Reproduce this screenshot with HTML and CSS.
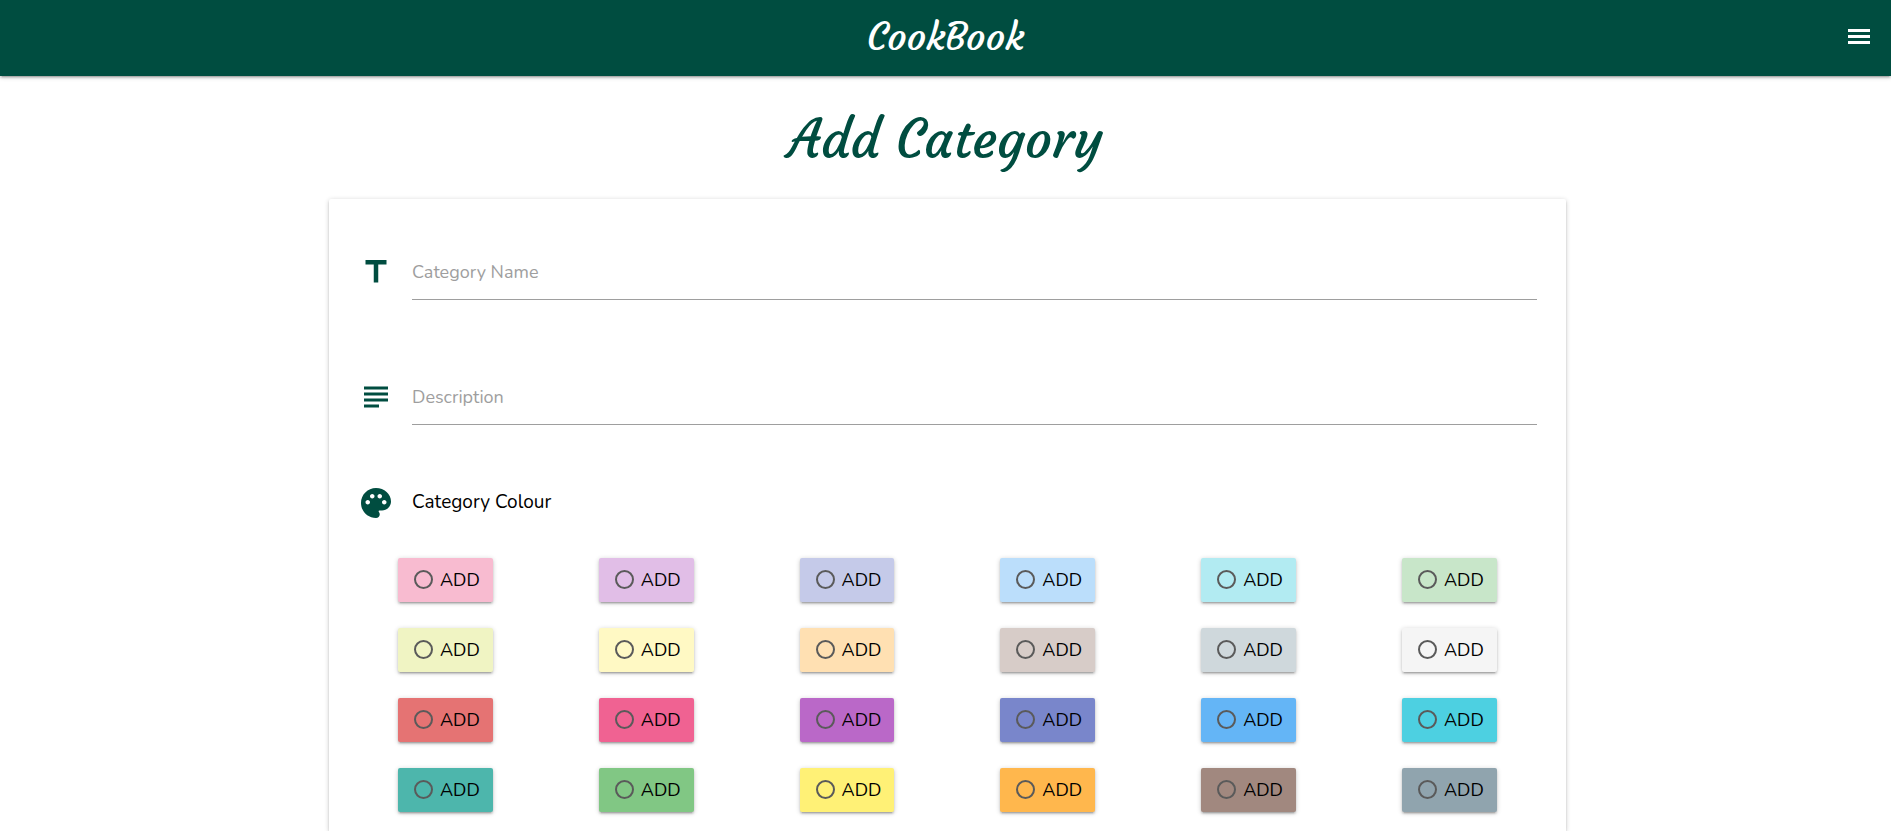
FILE: index.html
```html
<!DOCTYPE html>
<html lang="en">
<head>
<meta charset="utf-8">
<meta name="viewport" content="width=device-width, initial-scale=1">
<title>CookBook - Add Category</title>
<link rel="stylesheet" href="styles.css">
</head>
<body>
<header class="navbar">
  <a class="brand" href="#">CookBook</a>
  <button class="menu-button" type="button" aria-label="Menu">
    <svg viewBox="0 0 30 30" aria-hidden="true"><path d="M4 7h22v3H4zM4 13h22v3H4zM4 19h22v3H4z"/></svg>
  </button>
</header>
<main class="page">
  <h1 class="title">Add Category</h1>
  <form class="card">
    <div class="field">
      <svg class="icon" viewBox="0 0 24 24" aria-hidden="true"><path d="M5 4v3h5.5v12h3V7H19V4z"/></svg>
      <input class="text-input" type="text" placeholder="Category Name" aria-label="Category Name">
    </div>
    <div class="field">
      <svg class="icon" viewBox="0 0 24 24" aria-hidden="true"><path d="M14 17H4v2h10v-2zm6-8H4v2h16V9zM4 15h16v-2H4v2zM4 5v2h16V5H4z"/></svg>
      <input class="text-input" type="text" placeholder="Description" aria-label="Description">
    </div>
    <div class="colour-heading">
      <svg class="icon" viewBox="0 0 24 24" aria-hidden="true"><path d="M12 2C6.49 2 2 6.49 2 12s4.49 10 10 10c1.38 0 2.5-1.12 2.5-2.5 0-.61-.23-1.2-.64-1.67-.08-.1-.13-.21-.13-.33 0-.28.22-.5.5-.5H16c3.31 0 6-2.69 6-6 0-4.96-4.49-9-10-9zm5.5 11c-.83 0-1.5-.67-1.5-1.5s.67-1.5 1.5-1.5 1.5.67 1.5 1.5-.67 1.5-1.5 1.5zm-3-4c-.83 0-1.5-.67-1.5-1.5S13.67 6 14.5 6s1.5.67 1.5 1.5S15.33 9 14.5 9zM5 11.5c0-.83.67-1.5 1.5-1.5s1.5.67 1.5 1.5S7.33 13 6.5 13 5 12.33 5 11.5zm6-4c0 .83-.67 1.5-1.5 1.5S8 8.33 8 7.5 8.67 6 9.5 6s1.5.67 1.5 1.5z"/></svg>
      <span class="colour-label" id="colour-label">Category Colour</span>
    </div>
    <div class="swatches" role="radiogroup" aria-labelledby="colour-label">
      <label class="swatch pink-light"><input type="radio" name="colour"><span>ADD</span></label>
      <label class="swatch purple-light"><input type="radio" name="colour"><span>ADD</span></label>
      <label class="swatch indigo-light"><input type="radio" name="colour"><span>ADD</span></label>
      <label class="swatch blue-light"><input type="radio" name="colour"><span>ADD</span></label>
      <label class="swatch cyan-light"><input type="radio" name="colour"><span>ADD</span></label>
      <label class="swatch green-light"><input type="radio" name="colour"><span>ADD</span></label>
      <label class="swatch lime-light"><input type="radio" name="colour"><span>ADD</span></label>
      <label class="swatch yellow-light"><input type="radio" name="colour"><span>ADD</span></label>
      <label class="swatch orange-light"><input type="radio" name="colour"><span>ADD</span></label>
      <label class="swatch brown-light"><input type="radio" name="colour"><span>ADD</span></label>
      <label class="swatch slate-light"><input type="radio" name="colour"><span>ADD</span></label>
      <label class="swatch grey-light"><input type="radio" name="colour"><span>ADD</span></label>
      <label class="swatch red"><input type="radio" name="colour"><span>ADD</span></label>
      <label class="swatch pink"><input type="radio" name="colour"><span>ADD</span></label>
      <label class="swatch purple"><input type="radio" name="colour"><span>ADD</span></label>
      <label class="swatch indigo"><input type="radio" name="colour"><span>ADD</span></label>
      <label class="swatch blue"><input type="radio" name="colour"><span>ADD</span></label>
      <label class="swatch cyan"><input type="radio" name="colour"><span>ADD</span></label>
      <label class="swatch teal"><input type="radio" name="colour"><span>ADD</span></label>
      <label class="swatch green"><input type="radio" name="colour"><span>ADD</span></label>
      <label class="swatch yellow"><input type="radio" name="colour"><span>ADD</span></label>
      <label class="swatch orange"><input type="radio" name="colour"><span>ADD</span></label>
      <label class="swatch brown"><input type="radio" name="colour"><span>ADD</span></label>
      <label class="swatch slate"><input type="radio" name="colour"><span>ADD</span></label>
    </div>
  </form>
</main>
</body>
</html>
```
FILE: styles.css
```css
* { box-sizing: border-box; }

body {
  margin: 0;
  min-height: 100vh;
  display: flex;
  flex-direction: column;
  background: #fff;
  color: rgba(0, 0, 0, 0.87);
  font-family: Nunito, Lato, sans-serif;
  font-size: 18px;
}

.navbar {
  display: grid;
  grid-template-columns: 1fr auto 1fr;
  align-items: center;
  height: 76px;
  padding: 0 17px 2px;
  background: #004d40;
  box-shadow: 0 2px 2px 0 rgba(0, 0, 0, 0.14), 0 3px 1px -2px rgba(0, 0, 0, 0.12), 0 1px 5px 0 rgba(0, 0, 0, 0.2);
}

.brand {
  grid-column: 2;
  color: #fff;
  font-family: Courgette, Lato, cursive;
  font-size: 38px;
  line-height: 72px;
  text-decoration: none;
}

.menu-button {
  justify-self: end;
  height: 30px;
  padding: 0;
  border: 0;
  background: none;
  cursor: pointer;
}

.menu-button svg { display: block; width: 30px; height: 30px; fill: #fff; }

.page { flex: 1; display: flex; flex-direction: column; }

.title {
  margin: 27px 0 24px;
  color: #004d40;
  font-family: Courgette, Lato, cursive;
  font-size: 53px;
  font-weight: 400;
  line-height: 72px;
  text-align: center;
}

.card {
  flex: 1;
  width: 65.4%;
  margin: 0 0 0 17.4%;
  padding: 46px 16px 19px;
  border-radius: 2px 2px 0 0;
  background: #fff;
  box-shadow: 0 2px 2px 0 rgba(0, 0, 0, 0.14), 0 3px 1px -2px rgba(0, 0, 0, 0.12), 0 1px 5px 0 rgba(0, 0, 0, 0.2);
}

.field, .colour-heading { display: flex; align-items: center; gap: 18px; padding: 0 13px; }
.field { margin-bottom: 70px; }
.field .icon { margin-bottom: 2px; }
.colour-heading { margin: -10px 0 37px; }
.colour-label { color: #000; font-size: 19px; line-height: 24px; padding-bottom: 2px; }

.icon { flex: none; width: 36px; height: 36px; fill: #004d40; }

.text-input {
  flex: 1;
  min-width: 0;
  height: 55px;
  padding: 0;
  border: 0;
  border-bottom: 1px solid #9e9e9e;
  border-radius: 0;
  outline: 0;
  background: transparent;
  color: inherit;
  font: inherit;
}

.text-input::placeholder { color: #9e9e9e; opacity: 1; }

.swatches {
  display: grid;
  grid-template-columns: repeat(6, 1fr);
  justify-items: center;
  row-gap: 26px;
}

.swatch {
  display: flex;
  align-items: center;
  gap: 7px;
  height: 44px;
  padding: 0 13px 0 16px;
  border-radius: 2px;
  color: #000;
  box-shadow: 0 2px 2px 0 rgba(0, 0, 0, 0.14), 0 3px 1px -2px rgba(0, 0, 0, 0.12), 0 1px 5px 0 rgba(0, 0, 0, 0.2);
  cursor: pointer;
}

.swatch input {
  appearance: none;
  width: 19px;
  height: 19px;
  margin: 0 0 2px;
  border: 2px solid #5a5a5a;
  border-radius: 50%;
}

.swatch input:checked { background: #004d40; }

.pink-light { background: #f8bbd0; }
.purple-light { background: #e1bee7; }
.indigo-light { background: #c5cae9; }
.blue-light { background: #bbdefb; }
.cyan-light { background: #b2ebf2; }
.green-light { background: #c8e6c9; }
.lime-light { background: #f0f4c3; }
.yellow-light { background: #fff9c4; }
.orange-light { background: #ffe0b2; }
.brown-light { background: #d7ccc8; }
.slate-light { background: #cfd8dc; }
.grey-light { background: #f5f5f5; }
.red { background: #e57373; }
.pink { background: #f06292; }
.purple { background: #ba68c8; }
.indigo { background: #7986cb; }
.blue { background: #64b5f6; }
.cyan { background: #4dd0e1; }
.teal { background: #4db6ac; }
.green { background: #81c784; }
.yellow { background: #fff176; }
.orange { background: #ffb74d; }
.brown { background: #a1887f; }
.slate { background: #90a4ae; }
```
